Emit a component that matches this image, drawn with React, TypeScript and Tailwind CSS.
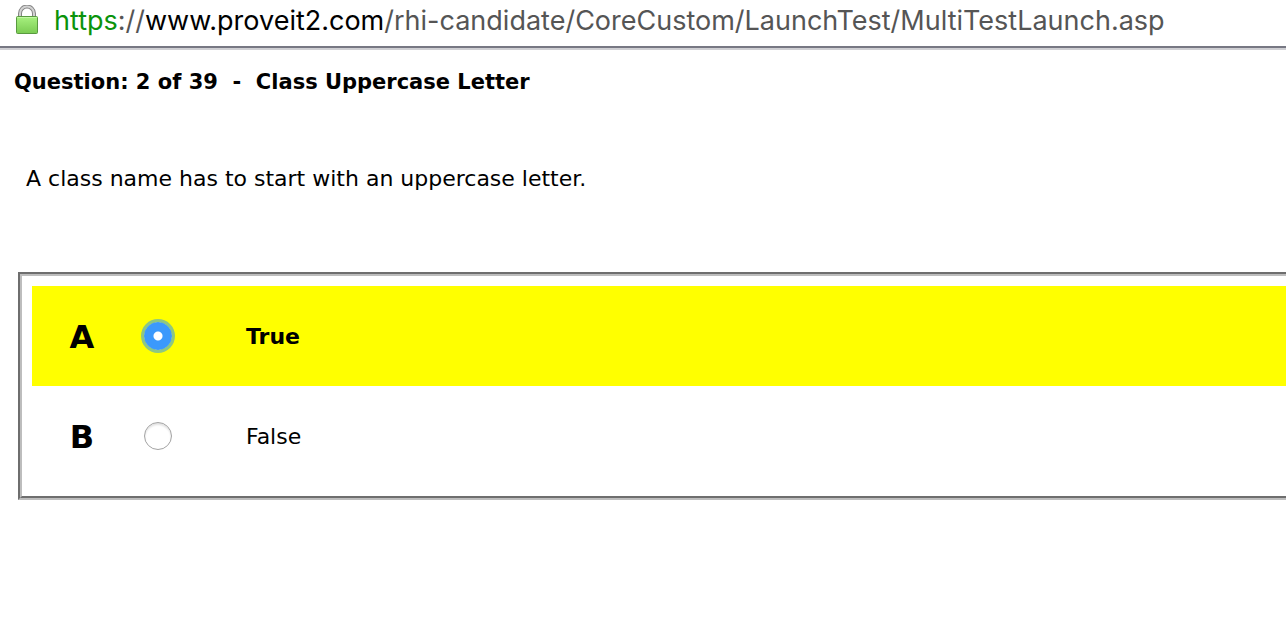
import { useState } from "react";

const answers = [
  { letter: "A", text: "True" },
  { letter: "B", text: "False" },
];

function LockIcon() {
  return (
    <svg width="24" height="32" viewBox="0 0 24 32" aria-hidden="true" className="shrink-0">
      <defs>
        <linearGradient id="lock-body" x1="0" y1="0" x2="0" y2="1">
          <stop offset="0" stopColor="#a8f180" />
          <stop offset="1" stopColor="#7acb52" />
        </linearGradient>
      </defs>
      <path d="M5 13V8.5a7 7 0 0 1 14 0V13" fill="none" stroke="#858585" strokeWidth="4" />
      <path d="M5 13V8.5a7 7 0 0 1 14 0V13" fill="none" stroke="#d2d2d2" strokeWidth="2" />
      <rect x="1.5" y="11.5" width="21" height="17" rx="1" fill="url(#lock-body)" stroke="#599a40" />
      <path d="M2.5 12.5h19" stroke="#c2f7a4" />
    </svg>
  );
}

export default function App() {
  const [selected, setSelected] = useState("A");

  return (
    <div className="overflow-hidden bg-white font-['DejaVu_Sans',Verdana,sans-serif] text-[22px] leading-7 text-black">
      <header className="border-b-2 border-[#cfcfd3]">
        <div className="flex h-12 items-start gap-[15px] border-b-2 border-[#777883] pt-[5px] pl-[15px]">
          <LockIcon />
          <p className="whitespace-nowrap font-[Inter,sans-serif] text-[27px] leading-8 text-[#555555]">
            <span className="text-[#0b930b]">https</span>://<span className="text-black">www.proveit2.com</span>
            /rhi-candidate/CoreCustom/LaunchTest/MultiTestLaunch.asp
          </p>
        </div>
      </header>
      <main>
        <h1 className="pt-[18px] pl-[14px] text-[21px] leading-7 font-bold whitespace-pre">
          {"Question: 2 of 39  -  Class Uppercase Letter"}
        </h1>
        <p id="question" className="mt-[69px] pl-[26px]">
          A class name has to start with an uppercase letter.
        </p>
        <fieldset
          aria-labelledby="question"
          className="mt-[79px] ml-[18px] border-t-2 border-b-2 border-l-2 border-t-[#6e6e6e] border-b-[#bdbdbd] border-l-[#6e6e6e]"
        >
          <div className="border-t-2 border-b-2 border-l-2 border-t-[#bdbdbd] border-b-[#6e6e6e] border-l-[#bdbdbd] py-[10px] pl-[10px]">
            {answers.map(({ letter, text }) => {
              const active = selected === letter;
              return (
                <label
                  key={letter}
                  className={active ? "flex h-[100px] items-center bg-[#ffff00] font-bold" : "flex h-[100px] items-center"}
                >
                  <span className="w-[100px] pt-[2px] text-center text-[32px] leading-10 font-bold">{letter}</span>
                  <span className="flex w-[114px] justify-start pl-3">
                    <input
                      type="radio"
                      name="answer"
                      value={letter}
                      checked={active}
                      onChange={() => setSelected(letter)}
                      className="size-7 appearance-none rounded-full border border-[#a3a3a3] bg-white shadow-[inset_0_2px_2px_#e2e2e2] outline-none checked:border-[#3b99fc] checked:bg-[radial-gradient(circle,#ffffff_4px,#3b99fc_5px)] checked:shadow-[0_0_0_3px_#8ec782]"
                    />
                  </span>
                  <span className="pt-[2px]">{text}</span>
                </label>
              );
            })}
          </div>
        </fieldset>
      </main>
    </div>
  );
}
